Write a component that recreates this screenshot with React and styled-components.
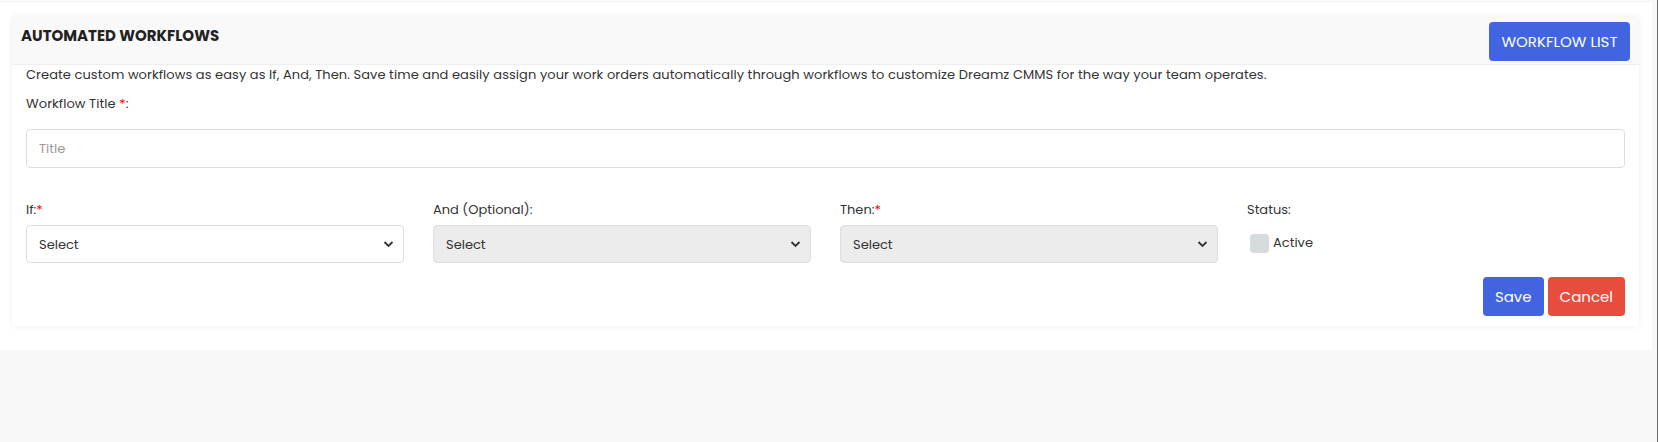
import React from "react";
import styled, { createGlobalStyle } from "styled-components";

const GlobalStyle = createGlobalStyle`
  html, body {
    margin: 0;
    padding: 0;
    background: #f8f8f8;
    font-family: "Poppins", "Open Sans", "Noto Sans", sans-serif;
  }
  * { box-sizing: border-box; }
`;

const Page = styled.div`
  height: 442px;
  padding-top: 3px;
  border-right: 1px solid #6b6b6b;
  padding-right: 5px;
`;

const Section = styled.div`
  background: #fff;
  padding: 14px 13px 24px 12px;
`;

const Card = styled.div`
  background: #fff;
  border-radius: 4px;
  box-shadow: 0 0 6px rgba(0, 0, 0, 0.08);
  overflow: hidden;
`;

const CardHeader = styled.div`
  display: flex;
  justify-content: space-between;
  align-items: flex-start;
  height: 48px;
  padding: 5px 9px 0 9px;
  background: #f9f9f9;
  border-bottom: 1px solid #eeeeee;
`;

const Title = styled.h4`
  margin: 0;
  padding-top: 4px;
  font-size: 15px;
  font-weight: 700;
  line-height: 20px;
  color: #222;
`;

const Button = styled.button`
  border: none;
  border-radius: 4px;
  color: #fff;
  font-family: inherit;
  font-size: ${(p) => p.size || 15}px;
  height: 39px;
  padding: 0 ${(p) => p.pad || 10}px;
  background: ${(p) => p.color || "#4165e0"};
  cursor: pointer;
`;

const CardBody = styled.div`
  padding: 0 14px 10px 14px;
  color: #333;
  font-size: 13px;
`;

const Text = styled.p`
  margin: 0;
  line-height: 20px;
  letter-spacing: 0.07px;
  padding-top: ${(p) => p.top || 0}px;
`;

const Star = styled.span`
  color: #ff0000;
`;

const TitleInput = styled.input`
  display: block;
  width: 100%;
  height: 39px;
  margin-top: 15px;
  padding: 0 12px;
  border: 1px solid #dedede;
  border-radius: 4px;
  font-family: inherit;
  font-size: 13px;
  color: #333;
  outline: none;
  &::placeholder { color: #9a9a9a; }
`;

const Grid = styled.div`
  display: grid;
  grid-template-columns: repeat(4, 1fr);
  column-gap: 29px;
  margin-top: 32px;
`;

const Field = styled.div`
  display: flex;
  flex-direction: column;
`;

const Label = styled.label`
  line-height: 20px;
  margin-bottom: 5px;
`;

const SelectWrap = styled.div`
  position: relative;
  svg {
    position: absolute;
    right: 10px;
    top: 15px;
    pointer-events: none;
  }
`;

const Select = styled.select`
  appearance: none;
  width: 100%;
  height: 38px;
  padding: 0 12px;
  border: 1px solid #dedede;
  border-radius: 4px;
  background: ${(p) => (p.disabled ? "#ececec" : "#fff")};
  font-family: inherit;
  font-size: 13px;
  color: #333;
  opacity: 1;
`;

const CheckRow = styled.div`
  display: flex;
  align-items: center;
  gap: 4px;
  margin-top: 8px;
  margin-left: 3px;
`;

const Box = styled.span`
  width: 19px;
  height: 19px;
  border-radius: 4px;
  background: #d6dbde;
`;

const Actions = styled.div`
  display: flex;
  justify-content: flex-end;
  gap: 4px;
  margin-top: 14px;
`;

const Chevron = () => (
  <svg width="11" height="8" viewBox="0 0 11 8">
    <path d="M1.5 2 L5.5 6 L9.5 2" fill="none" stroke="#333" strokeWidth="1.8" />
  </svg>
);

const Dropdown = ({ disabled }) => (
  <SelectWrap>
    <Select disabled={disabled} defaultValue="">
      <option value="">Select</option>
    </Select>
    <Chevron />
  </SelectWrap>
);

export default function App() {
  return (
    <>
      <GlobalStyle />
      <Page>
        <Section>
          <Card>
            <CardHeader>
              <Title>AUTOMATED WORKFLOWS</Title>
              <Button pad={12.5}>WORKFLOW LIST</Button>
            </CardHeader>
            <CardBody>
              <Text>
                Create custom workflows as easy as If, And, Then. Save time and easily assign your work orders automatically through workflows to customize Dreamz CMMS for the way your team operates.
              </Text>
              <Text top={9}>
                Workflow Title <Star>*</Star>:
              </Text>
              <TitleInput placeholder="Title" />
              <Grid>
                <Field>
                  <Label>
                    If:<Star>*</Star>
                  </Label>
                  <Dropdown />
                </Field>
                <Field>
                  <Label>And (Optional):</Label>
                  <Dropdown disabled />
                </Field>
                <Field>
                  <Label>
                    Then:<Star>*</Star>
                  </Label>
                  <Dropdown disabled />
                </Field>
                <Field>
                  <Label>Status:</Label>
                  <CheckRow>
                    <Box />
                    <span>Active</span>
                  </CheckRow>
                </Field>
              </Grid>
              <Actions>
                <Button pad={12}>Save</Button>
                <Button pad={12} color="#e74c3c">
                  Cancel
                </Button>
              </Actions>
            </CardBody>
          </Card>
        </Section>
      </Page>
    </>
  );
}
